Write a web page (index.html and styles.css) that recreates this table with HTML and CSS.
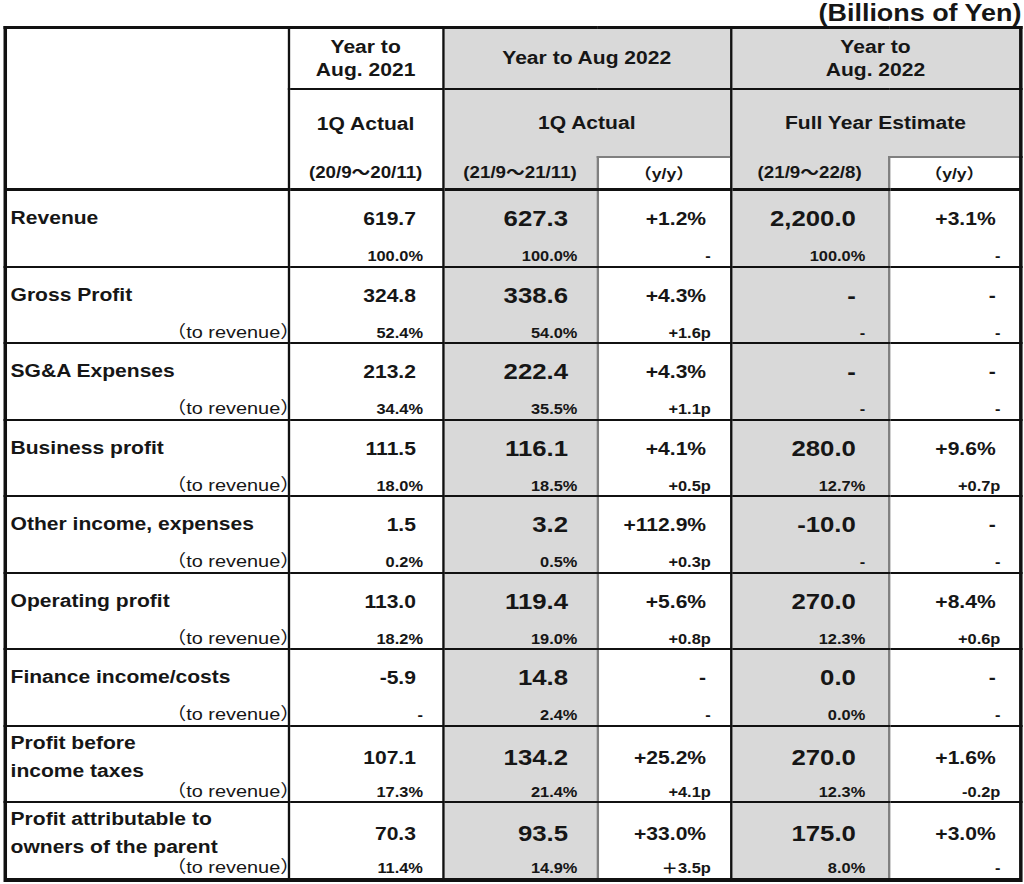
FILE: index.html
```html
<!DOCTYPE html>
<html lang="en">
<head>
    <meta charset="UTF-8" />
    <meta name="viewport" content="width=device-width, initial-scale=1.0"/>

    <title>1Q Results Summary</title>

    <link rel="stylesheet" href="styles.css">
</head>
<body>

<div class="sheet">
    <div class="unit">(Billions of Yen)</div>

    <table class="results">
        <colgroup>
            <col class="w-label">
            <col class="w-c1">
            <col class="w-c2">
            <col class="w-c3">
            <col class="w-c4">
            <col class="w-c5">
        </colgroup>
        <thead>
            <tr class="head-a">
                <th class="corner" rowspan="3"></th>
                <th class="c1">Year to<br>Aug. 2021</th>
                <th class="shade" colspan="2">Year to Aug 2022</th>
                <th class="shade" colspan="2">Year to<br>Aug. 2022</th>
            </tr>
            <tr class="head-b">
                <th class="c1 period" rowspan="2">
                    <div class="period-title">1Q Actual</div>
                    <div class="period-range">(20/9～20/11)</div>
                </th>
                <th class="shade open" colspan="2">1Q Actual</th>
                <th class="shade open" colspan="2">Full Year Estimate</th>
            </tr>
            <tr class="head-c">
                <th class="c2 shade range">(21/9～21/11)</th>
                <th class="c3 yy">（y/y）</th>
                <th class="c4 shade range">(21/9～22/8)</th>
                <th class="c5 yy">（y/y）</th>
            </tr>
        </thead>
        <tbody>
            <tr>
                <td class="label"><div class="main">Revenue</div><div class="sub"></div></td>
                <td class="c1"><div class="main">619.7</div><div class="sub">100.0%</div></td>
                <td class="c2"><div class="main">627.3</div><div class="sub">100.0%</div></td>
                <td class="c3"><div class="main">+1.2%</div><div class="sub">-</div></td>
                <td class="c4"><div class="main">2,200.0</div><div class="sub">100.0%</div></td>
                <td class="c5"><div class="main">+3.1%</div><div class="sub">-</div></td>
            </tr>
            <tr>
                <td class="label"><div class="main">Gross Profit</div><div class="sub"><span>（to revenue）</span></div></td>
                <td class="c1"><div class="main">324.8</div><div class="sub">52.4%</div></td>
                <td class="c2"><div class="main">338.6</div><div class="sub">54.0%</div></td>
                <td class="c3"><div class="main">+4.3%</div><div class="sub">+1.6p</div></td>
                <td class="c4"><div class="main">-</div><div class="sub">-</div></td>
                <td class="c5"><div class="main">-</div><div class="sub">-</div></td>
            </tr>
            <tr>
                <td class="label"><div class="main">SG&amp;A Expenses</div><div class="sub"><span>（to revenue）</span></div></td>
                <td class="c1"><div class="main">213.2</div><div class="sub">34.4%</div></td>
                <td class="c2"><div class="main">222.4</div><div class="sub">35.5%</div></td>
                <td class="c3"><div class="main">+4.3%</div><div class="sub">+1.1p</div></td>
                <td class="c4"><div class="main">-</div><div class="sub">-</div></td>
                <td class="c5"><div class="main">-</div><div class="sub">-</div></td>
            </tr>
            <tr>
                <td class="label"><div class="main">Business profit</div><div class="sub"><span>（to revenue）</span></div></td>
                <td class="c1"><div class="main">111.5</div><div class="sub">18.0%</div></td>
                <td class="c2"><div class="main">116.1</div><div class="sub">18.5%</div></td>
                <td class="c3"><div class="main">+4.1%</div><div class="sub">+0.5p</div></td>
                <td class="c4"><div class="main">280.0</div><div class="sub">12.7%</div></td>
                <td class="c5"><div class="main">+9.6%</div><div class="sub">+0.7p</div></td>
            </tr>
            <tr>
                <td class="label"><div class="main">Other income, expenses</div><div class="sub"><span>（to revenue）</span></div></td>
                <td class="c1"><div class="main">1.5</div><div class="sub">0.2%</div></td>
                <td class="c2"><div class="main">3.2</div><div class="sub">0.5%</div></td>
                <td class="c3"><div class="main">+112.9%</div><div class="sub">+0.3p</div></td>
                <td class="c4"><div class="main">-10.0</div><div class="sub">-</div></td>
                <td class="c5"><div class="main">-</div><div class="sub">-</div></td>
            </tr>
            <tr>
                <td class="label"><div class="main">Operating profit</div><div class="sub"><span>（to revenue）</span></div></td>
                <td class="c1"><div class="main">113.0</div><div class="sub">18.2%</div></td>
                <td class="c2"><div class="main">119.4</div><div class="sub">19.0%</div></td>
                <td class="c3"><div class="main">+5.6%</div><div class="sub">+0.8p</div></td>
                <td class="c4"><div class="main">270.0</div><div class="sub">12.3%</div></td>
                <td class="c5"><div class="main">+8.4%</div><div class="sub">+0.6p</div></td>
            </tr>
            <tr>
                <td class="label"><div class="main">Finance income/costs</div><div class="sub"><span>（to revenue）</span></div></td>
                <td class="c1"><div class="main">-5.9</div><div class="sub">-</div></td>
                <td class="c2"><div class="main">14.8</div><div class="sub">2.4%</div></td>
                <td class="c3"><div class="main">-</div><div class="sub">-</div></td>
                <td class="c4"><div class="main">0.0</div><div class="sub">0.0%</div></td>
                <td class="c5"><div class="main">-</div><div class="sub">-</div></td>
            </tr>
            <tr class="two">
                <td class="label"><div class="main">Profit before<br>income taxes</div><div class="sub"><span>（to revenue）</span></div></td>
                <td class="c1"><div class="main">107.1</div><div class="sub">17.3%</div></td>
                <td class="c2"><div class="main">134.2</div><div class="sub">21.4%</div></td>
                <td class="c3"><div class="main">+25.2%</div><div class="sub">+4.1p</div></td>
                <td class="c4"><div class="main">270.0</div><div class="sub">12.3%</div></td>
                <td class="c5"><div class="main">+1.6%</div><div class="sub">-0.2p</div></td>
            </tr>
            <tr class="two">
                <td class="label"><div class="main">Profit attributable to<br>owners of the parent</div><div class="sub"><span>（to revenue）</span></div></td>
                <td class="c1"><div class="main">70.3</div><div class="sub">11.4%</div></td>
                <td class="c2"><div class="main">93.5</div><div class="sub">14.9%</div></td>
                <td class="c3"><div class="main">+33.0%</div><div class="sub">＋3.5p</div></td>
                <td class="c4"><div class="main">175.0</div><div class="sub">8.0%</div></td>
                <td class="c5"><div class="main">+3.0%</div><div class="sub">-</div></td>
            </tr>
        </tbody>
    </table>
</div>

</body>
</html>
```

FILE: styles.css
```css
body {
    margin: 0;
    background: #fff;
    color: #161616;
    font-family: "Liberation Sans", Arial, "Noto Sans CJK JP", sans-serif;
}

.sheet {
    width: 875px;
    transform: scaleX(1.17);
    transform-origin: 0 0;
}

.unit {
    height: 26px;
    line-height: 26px;
    padding-right: 2px;
    text-align: right;
    font-size: 23px;
    font-weight: bold;
}

/* Table */
.results {
    margin-left: 3px;
    border-collapse: collapse;
    table-layout: fixed;
    border: 3px solid #111;
    border-bottom-width: 4px;
}

.w-label { width: 242px; }
.w-c1 { width: 132px; }
.w-c2 { width: 132px; }
.w-c3 { width: 114px; }
.w-c4 { width: 135px; }
.w-c5 { width: 113px; }

.results th,
.results td {
    border: 2px solid #111;
    padding: 0;
}

.shade {
    background: #d9d9d9;
}

/* Header */
.results th {
    font-size: 18px;
    font-weight: bold;
    line-height: 23px;
    text-align: center;
    vertical-align: middle;
}

.head-a th { height: 59px; }
.head-b th { height: 66px; }
.head-c th { height: 30px; }

.results th.corner {
    border-bottom-width: 3px;
}

.results th.period {
    vertical-align: top;
    border-bottom-width: 3px;
}

.period-title {
    height: 68px;
    line-height: 68px;
}

.period-range {
    line-height: 30px;
    font-size: 16px;
}

.results th.open {
    border-bottom: none;
}

.head-c th {
    border-bottom-width: 3px;
}

.results th.range {
    font-size: 16px;
    border-top: none;
}

.results th.yy {
    font-size: 15px;
    border-top: 2px solid #808080;
}

/* Light dividers between the figures and their y/y columns */
.results .c2,
.results .c4 {
    border-right: none;
}

.results .c3,
.results .c5 {
    border-left: 2px solid #808080;
}

/* Body rows */
.results td {
    vertical-align: top;
    text-align: right;
    font-weight: bold;
}

.results td.c2,
.results td.c4 {
    background: #d9d9d9;
}

.main {
    height: 56px;
    box-sizing: border-box;
    padding: 16px 22px 0 0;
    font-size: 18px;
    line-height: 24px;
}

.sub {
    height: 18.5px;
    padding-right: 16px;
    font-size: 14px;
    line-height: 18px;
}

.c2 .main { padding-right: 24px; }
.c3 .main,
.c5 .main { padding-right: 20px; }
.c4 .main { padding-right: 27px; }
.c4 .sub { padding-right: 19px; }

.c2 .main,
.c4 .main {
    font-size: 22px;
}

.two .main {
    padding-top: 19px;
}

/* Row labels */
.results td.label {
    text-align: left;
}

.label .main {
    padding: 15px 0 0 3px;
}

.two .label .main {
    padding-top: 2px;
    line-height: 28px;
}

.label .sub {
    padding-right: 0;
    text-align: right;
    font-size: 17px;
    font-weight: normal;
}

.label .sub span {
    margin-right: -11px;
}
```
